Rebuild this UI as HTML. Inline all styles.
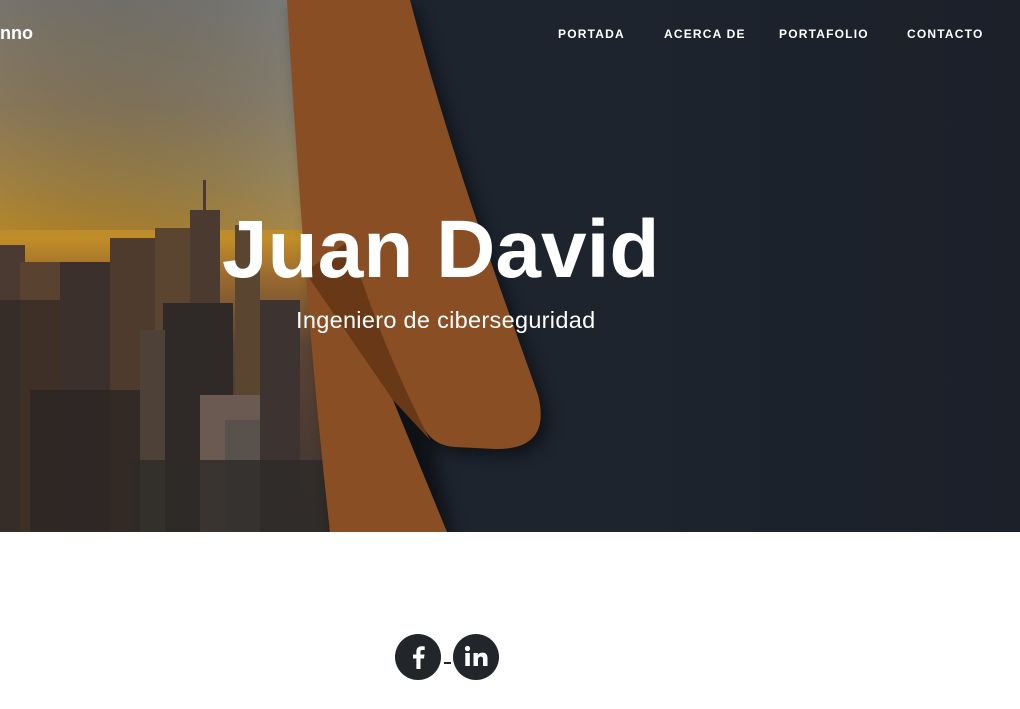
<!DOCTYPE html>
<html><head><meta charset="utf-8"><style>
*{margin:0;padding:0;box-sizing:border-box}
html,body{width:1020px;height:709px;overflow:hidden;background:#fff;font-family:"Liberation Sans",sans-serif}
#hero{position:absolute;left:0;top:0;width:1020px;height:532px;background:linear-gradient(90deg,#1e2530 0%,#1d242e 60%,#1b2029 100%);overflow:hidden}
.nav{position:absolute;top:27px;color:#fff;font-weight:bold;font-size:12px;letter-spacing:1.2px}
.brand{position:absolute;left:0;top:23px;color:#fff;font-weight:bold;font-size:18px}
h1{position:absolute;left:222px;top:200px;color:#fff;font-size:82px;font-weight:bold;letter-spacing:0;white-space:nowrap;line-height:100px}
.sub{position:absolute;left:296px;top:307px;color:#fff;font-size:23.5px;font-weight:normal;letter-spacing:0.3px;white-space:nowrap}
.ic{position:absolute;top:634px;width:46px;height:46px;border-radius:50%;background:#22252a}
</style></head><body>
<div id="hero">
<svg width="1020" height="532" style="position:absolute;left:0;top:0">
<defs>
<linearGradient id="sky" x1="0" y1="0" x2="0" y2="1">
<stop offset="0" stop-color="#7d7a72"/>
<stop offset="0.2" stop-color="#8f7d5e"/>
<stop offset="0.35" stop-color="#a98843"/>
<stop offset="0.45" stop-color="#c18d28"/>
<stop offset="0.52" stop-color="#9a6a30"/>
<stop offset="0.65" stop-color="#5a4334"/>
<stop offset="1" stop-color="#3c3330"/>
</linearGradient>
<linearGradient id="skyh" x1="0" y1="0" x2="1" y2="0">
<stop offset="0" stop-color="#000" stop-opacity="0.05"/>
<stop offset="1" stop-color="#7a8590" stop-opacity="0.35"/>
</linearGradient>
<filter id="bl" x="-20%" y="-20%" width="140%" height="140%"><feGaussianBlur stdDeviation="8"/></filter>
</defs>
<path d="M0,0 L300,0 C305,180 320,360 335,532 L0,532 Z" fill="url(#sky)"/>
<path d="M0,0 L300,0 C305,100 310,180 315,230 L0,230 Z" fill="url(#skyh)"/>
<g fill="#4a3a32">
<rect x="0" y="245" width="25" height="287"/>
<rect x="20" y="262" width="95" height="270" fill="#5a4230"/>
<rect x="60" y="262" width="80" height="270" fill="#3c302c"/>
<rect x="110" y="238" width="45" height="294" fill="#4e3b2e"/>
<rect x="155" y="228" width="38" height="304" fill="#5b4530"/>
<rect x="190" y="210" width="30" height="322" fill="#4a3a30"/>
<rect x="203" y="180" width="3" height="30"/>
<rect x="235" y="225" width="25" height="307" fill="#5a4530"/>
<rect x="163" y="303" width="70" height="229" fill="#2f2a28"/>
<rect x="140" y="330" width="25" height="202" fill="#4e4238"/>
<rect x="200" y="395" width="80" height="137" fill="#6b5a52"/>
<rect x="225" y="420" width="55" height="112" fill="#59514c"/>
<rect x="260" y="300" width="40" height="232" fill="#3d3330"/>
<rect x="0" y="300" width="60" height="232" fill="#2c2522" opacity="0.6"/>
<rect x="30" y="390" width="110" height="142" fill="#2a2422" opacity="0.7"/>
<rect x="130" y="460" width="200" height="72" fill="#2d2a28" opacity="0.8"/>
</g>
<!-- shadows -->
<g filter="url(#bl)" fill="#000" opacity="0.5" transform="translate(6,6)">
<path d="M287,0 L410,0 C455,170 505,300 538,395 Q552,450 495,449 L455,447 Q435,446 425,430 L447,532 L330,532 Z"/>
</g>
<!-- back band -->
<path d="M287,0 L345,0 L370,260 L393,400 L447,532 L330,532 C315,400 300,220 287,0 Z" fill="#8a4e24"/>
<!-- shadow wedge -->
<path d="M305,272 L350,240 C374,310 400,378 430,440 L393,400 Z" fill="#683817"/>
<!-- front ribbon -->
<path d="M287,0 L410,0 C455,170 505,300 538,395 Q552,450 495,449 L455,447 Q435,446 425,430 C390,360 362,290 342,215 C318,140 295,70 287,0 Z" fill="#8a4e24"/>
</svg>
<div class="brand">nno</div>
<div class="nav" style="left:558px">PORTADA</div>
<div class="nav" style="left:664px">ACERCA DE</div>
<div class="nav" style="left:779px">PORTAFOLIO</div>
<div class="nav" style="left:907px">CONTACTO</div>
<h1>Juan David</h1>
<div class="sub">Ingeniero de ciberseguridad</div>
</div>
<div class="ic" style="left:395px"><svg width="46" height="46" viewBox="0 0 46 46"><path d="M25.5,35 V24.5 H29 L29.5,20.5 H25.5 V18 C25.5,16.8 26,16 27.6,16 H29.7 V12.4 C29.2,12.3 28,12.2 26.6,12.2 C23.5,12.2 21.4,14 21.4,17.5 V20.5 H18 V24.5 H21.4 V35 Z" fill="#fff"/></svg></div>
<div style="position:absolute;left:444px;top:662px;width:7px;height:1.5px;background:#22252a"></div>
<div class="ic" style="left:453px"><svg width="46" height="46" viewBox="0 0 46 46"><circle cx="14.5" cy="14.5" r="2.6" fill="#fff"/><rect x="12.3" y="19" width="4.5" height="13" fill="#fff"/><path d="M20.5,19 H24.8 V21 C25.6,19.6 27.3,18.6 29.5,18.6 C33.3,18.6 34.5,21 34.5,24.6 V32 H30 V25.5 C30,23.8 29.5,22.6 27.8,22.6 C26,22.6 25,23.8 25,25.8 V32 H20.5 Z" fill="#fff"/></svg></div>
</body></html>
